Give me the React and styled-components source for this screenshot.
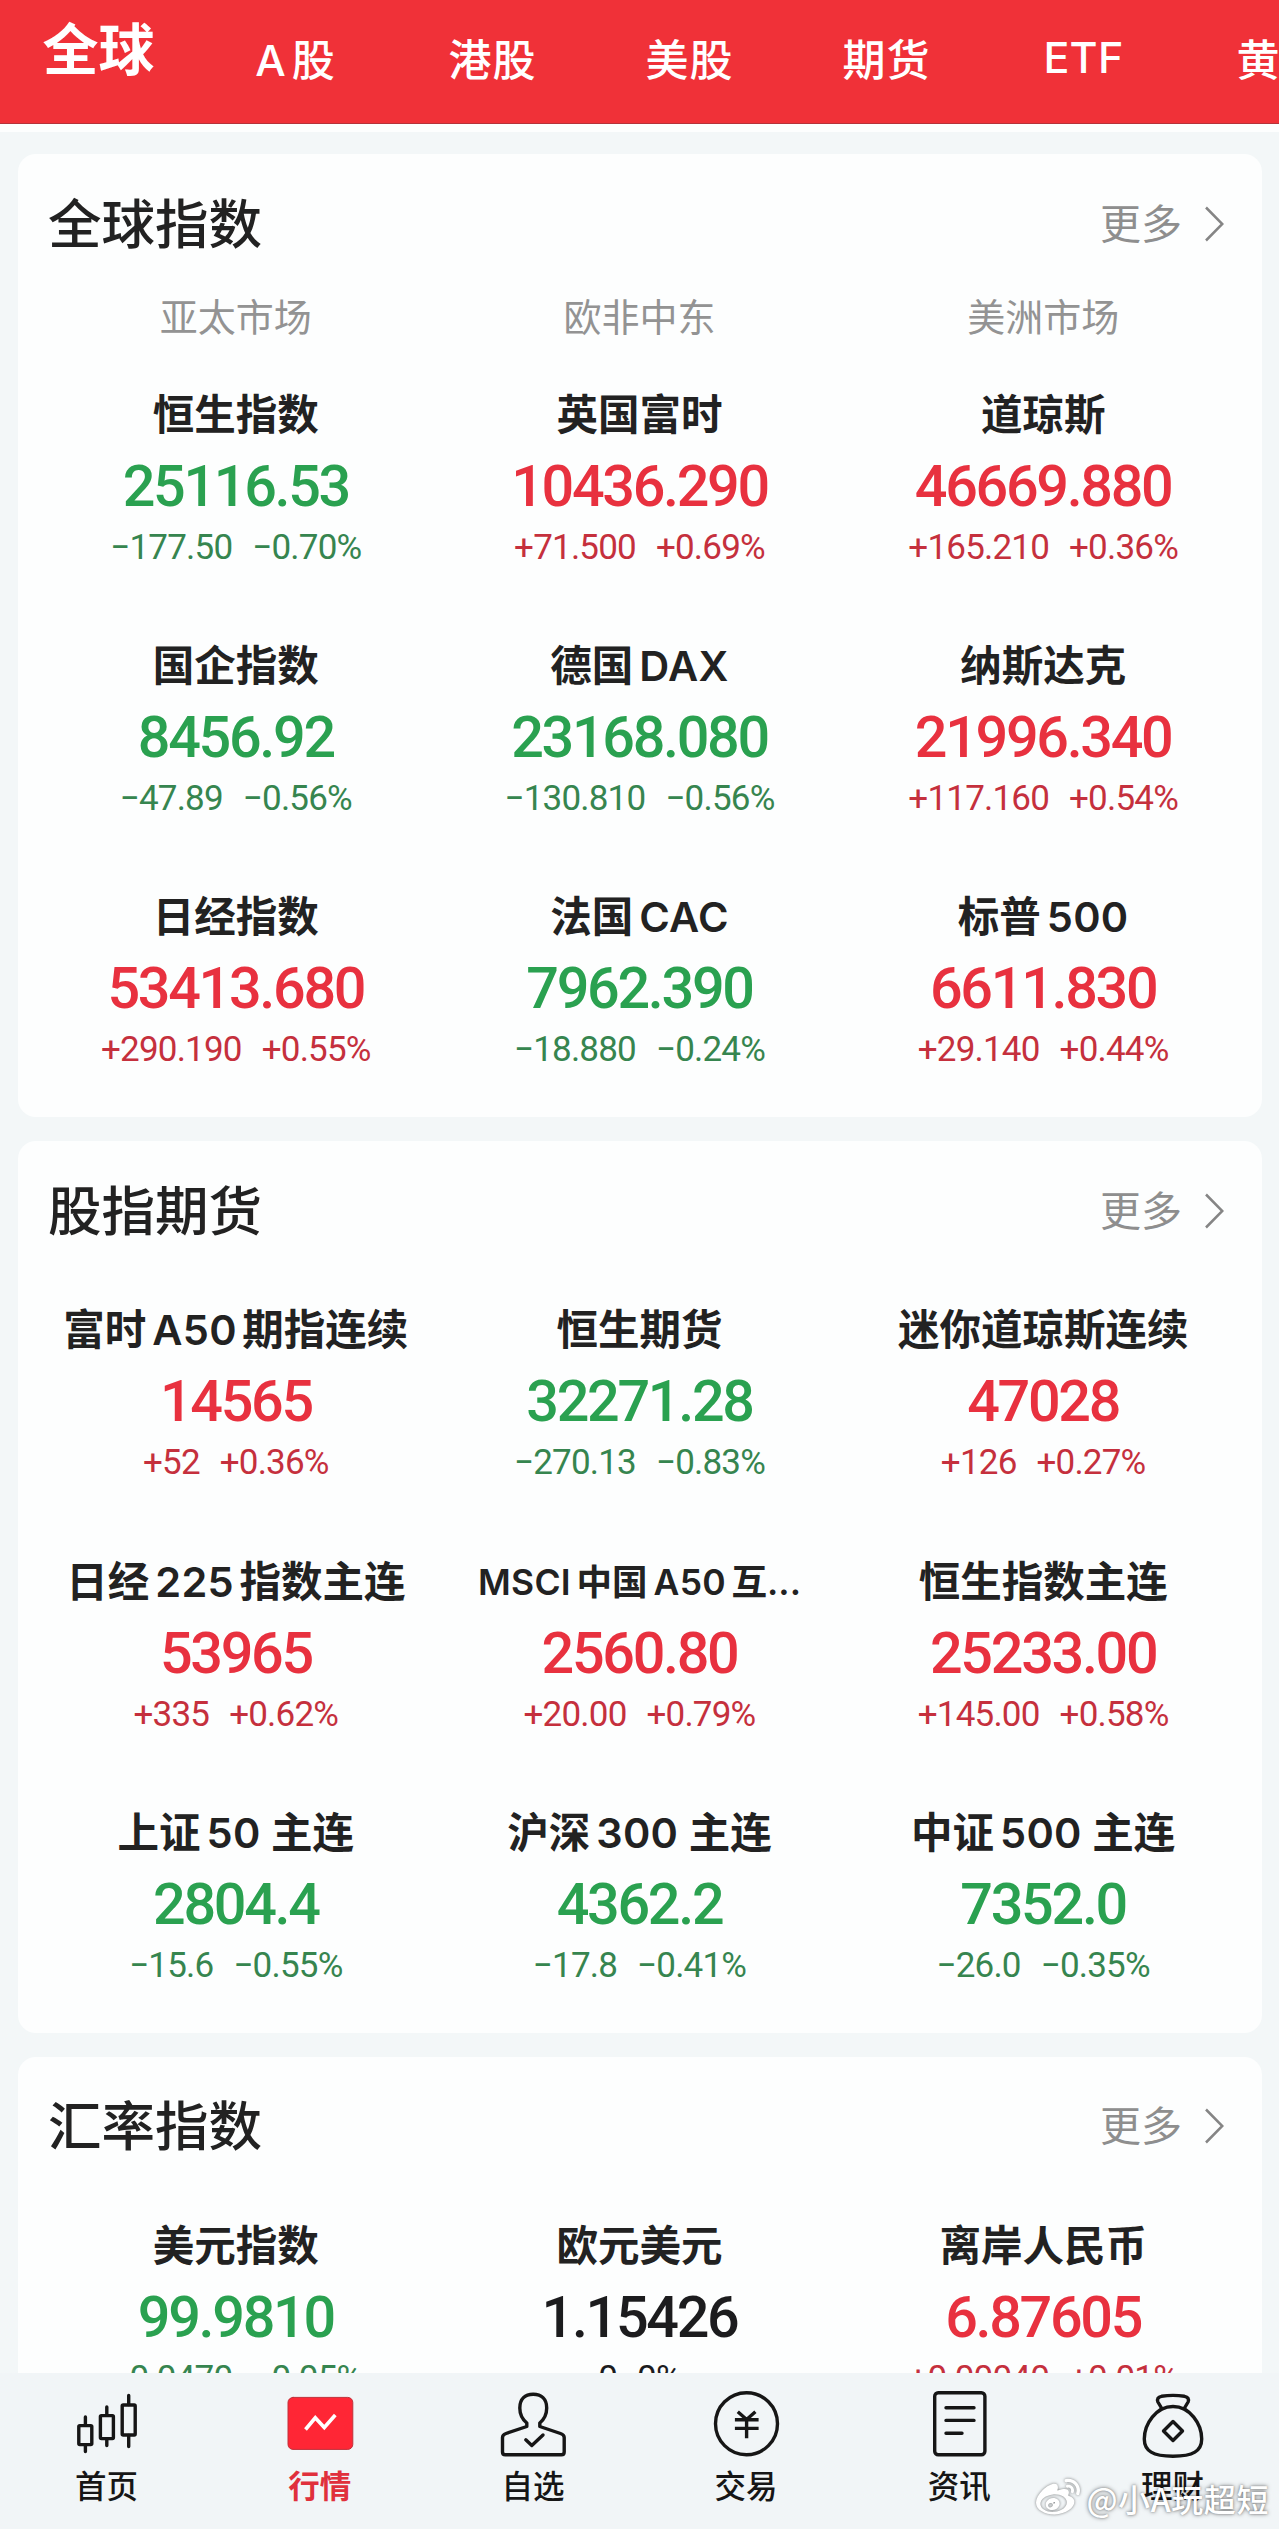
import { useState } from "react";
import styled, { createGlobalStyle } from "styled-components";
import { FaWeibo } from "react-icons/fa";

const GlobalStyle = createGlobalStyle`
  * {
    box-sizing: border-box;
  }
  body {
    margin: 0;
    background: #f3f7f8;
    font-family: Inter, "Noto Sans CJK SC", sans-serif;
    color: #222;
  }
`;

const colors = {
  up: "#e8313f",
  down: "#2aa150",
  flat: "#1c1c1e",
};

const subColors = {
  up: "#c5303d",
  down: "#36854f",
  flat: "#1c1c1e",
};

const Screen = styled.div`
  position: relative;
  display: flex;
  flex-direction: column;
  width: 1279px;
  height: 2529px;
  overflow: hidden;
`;

const TopTabs = styled.header`
  display: grid;
  grid-template-columns: repeat(7, 197px);
  flex: none;
  height: 124px;
  overflow: hidden;
  background: #f03138;
  border-bottom: 1px solid #b5333a;
`;

const TopTab = styled.button`
  height: ${(props) => (props.$active ? 91 : 113)}px;
  padding: 0;
  border: none;
  background: none;
  color: #fff;
  font-family: inherit;
  font-size: ${(props) => (props.$active ? 56 : 43)}px;
  font-weight: ${(props) => (props.$active ? 700 : 500)};
  letter-spacing: ${(props) => (props.$active ? 0 : 1)}px;
  white-space: nowrap;
`;

const Content = styled.main`
  display: flex;
  flex: 1;
  flex-direction: column;
  gap: 24px;
  min-height: 0;
  padding: 22px 17px 0 18px;
  overflow: hidden;
  border-top: 8px solid #fdfefe;
`;

const Card = styled.section`
  flex: none;
  padding: 0 17px 48px 16px;
  border-radius: 18px;
  background: #fdfefe;
`;

const CardHeader = styled.div`
  display: flex;
  align-items: center;
  justify-content: space-between;
  height: 141px;
  padding: 0 21px 0 14px;
`;

const CardTitle = styled.h2`
  margin: 0;
  font-size: 53.5px;
  font-weight: 500;
  line-height: 60px;
`;

const More = styled.button`
  display: flex;
  align-items: center;
  gap: 23px;
  padding: 0 0 2px;
  border: none;
  background: none;
  color: #8e8e8e;
  font-family: inherit;
  font-size: 41px;
  line-height: 50px;
`;

const Regions = styled.div`
  display: grid;
  grid-template-columns: repeat(3, 1fr);
  height: 72px;
  color: #939393;
  font-size: 38px;
  line-height: 45px;
  text-align: center;
`;

const Quotes = styled.div`
  display: grid;
  grid-template-columns: repeat(3, 1fr);
  row-gap: 51.2px;
`;

const Quote = styled.div`
  display: flex;
  flex-direction: column;
  align-items: center;
  height: 200px;
  padding-top: 20px;
  white-space: nowrap;
`;

const Name = styled.div`
  font-size: ${(props) => (props.$small ? 35.5 : 41.5)}px;
  font-weight: 600;
  line-height: 57px;
`;

const Latin = styled.span`
  margin-left: ${(props) => (props.$before ? 6 : 0)}px;
  margin-right: ${(props) => (props.$after ? 5.5 : 0)}px;
  letter-spacing: 0.3px;
`;

const Price = styled.div`
  color: ${(props) => colors[props.$trend]};
  font-family: Roboto, sans-serif;
  font-size: 57.5px;
  font-weight: 500;
  letter-spacing: -2.3px;
  line-height: 86px;
`;

const Change = styled.div`
  display: flex;
  gap: 20px;
  color: ${(props) => subColors[props.$trend]};
  font-family: Roboto, sans-serif;
  font-size: 35px;
  letter-spacing: -0.8px;
  line-height: 35px;
`;

const TabBar = styled.nav`
  display: grid;
  grid-template-columns: repeat(6, 1fr);
  flex: none;
  height: 156px;
  background: #f1f5f7;
`;

const TabItem = styled.button`
  display: flex;
  flex-direction: column;
  align-items: center;
  padding: 15px 0 0;
  border: none;
  background: none;
  color: ${(props) => (props.$active ? "#e0303c" : "#161616")};
  font-family: inherit;
  font-size: 31.5px;
  font-weight: ${(props) => (props.$active ? 700 : 500)};
  line-height: 53px;
`;

const Icon = styled.svg`
  display: block;
  fill: none;
  stroke: #161616;
  stroke-width: 3.4;
  stroke-linecap: round;
  stroke-linejoin: round;
`;

const Zigzag = styled.path`
  stroke: #fff;
  stroke-width: 3.6;
  stroke-linecap: butt;
  stroke-linejoin: miter;
`;

const Watermark = styled.div`
  position: absolute;
  right: 10px;
  bottom: 8px;
  display: flex;
  align-items: center;
  gap: 6px;
  color: #fff;
  font-family: "Noto Sans CJK SC", sans-serif;
  font-size: 32px;
  font-weight: 500;
  letter-spacing: 0.6px;
  line-height: 46px;
  text-shadow: 0 0 4px rgba(0, 0, 0, 0.5), 0 0 2px rgba(0, 0, 0, 0.3);

  svg {
    filter: drop-shadow(0 0 1.5px rgba(0, 0, 0, 0.5));
  }
`;

const topTabs = ["全球", "A股", "港股", "美股", "期货", "ETF", "黄金"];

const sections = [
  {
    title: "全球指数",
    regions: ["亚太市场", "欧非中东", "美洲市场"],
    quotes: [
      ["恒生指数", "25116.53", "−177.50", "−0.70%", "down"],
      ["英国富时", "10436.290", "+71.500", "+0.69%", "up"],
      ["道琼斯", "46669.880", "+165.210", "+0.36%", "up"],
      ["国企指数", "8456.92", "−47.89", "−0.56%", "down"],
      ["德国DAX", "23168.080", "−130.810", "−0.56%", "down"],
      ["纳斯达克", "21996.340", "+117.160", "+0.54%", "up"],
      ["日经指数", "53413.680", "+290.190", "+0.55%", "up"],
      ["法国CAC", "7962.390", "−18.880", "−0.24%", "down"],
      ["标普500", "6611.830", "+29.140", "+0.44%", "up"],
    ],
  },
  {
    title: "股指期货",
    quotes: [
      ["富时A50期指连续", "14565", "+52", "+0.36%", "up"],
      ["恒生期货", "32271.28", "−270.13", "−0.83%", "down"],
      ["迷你道琼斯连续", "47028", "+126", "+0.27%", "up"],
      ["日经225指数主连", "53965", "+335", "+0.62%", "up"],
      ["MSCI中国A50互...", "2560.80", "+20.00", "+0.79%", "up"],
      ["恒生指数主连", "25233.00", "+145.00", "+0.58%", "up"],
      ["上证50 主连", "2804.4", "−15.6", "−0.55%", "down"],
      ["沪深300 主连", "4362.2", "−17.8", "−0.41%", "down"],
      ["中证500 主连", "7352.0", "−26.0", "−0.35%", "down"],
    ],
  },
  {
    title: "汇率指数",
    quotes: [
      ["美元指数", "99.9810", "−0.0470", "−0.05%", "down"],
      ["欧元美元", "1.15426", "0", "0%", "flat"],
      ["离岸人民币", "6.87605", "+0.00040", "+0.01%", "up"],
    ],
  },
];

// adds a thin gap where latin letters or digits touch chinese characters
function SpacedText({ text }) {
  const parts = text.split(/([A-Za-z0-9]+)/).filter(Boolean);

  return parts.map((part, i) => {
    if (!/^[A-Za-z0-9]/.test(part)) return part;
    const next = parts[i + 1];
    return (
      <Latin key={i} $before={i > 0} $after={next && !next.startsWith(" ")}>
        {part}
      </Latin>
    );
  });
}

function HomeIcon() {
  return (
    <Icon width="72" height="72" viewBox="0 0 72 72">
      <rect x="7.8" y="37.6" width="13" height="19" rx="1" />
      <path d="M14.4 29v8M14.4 57v6.5" />
      <rect x="29.4" y="27.6" width="13" height="23" rx="1" />
      <path d="M35.8 19v8M35.8 51v6.5" />
      <rect x="51.2" y="17" width="13" height="30" rx="1" />
      <path d="M57.7 7.5v9M57.7 47.5v11" />
    </Icon>
  );
}

function MarketIcon() {
  return (
    <Icon width="72" height="72" viewBox="0 0 72 72">
      <rect x="4" y="9.4" width="64.8" height="52" rx="5" fill="#ff2635" stroke="#c0303a" strokeWidth="1" />
      <Zigzag d="M21.5 41.5L31.3 29.8L40.3 39.5L51.3 27" />
    </Icon>
  );
}

function WatchIcon() {
  return (
    <Icon width="72" height="72" viewBox="0 0 72 72">
      <path d="M29.8 38.5V35C25 31 22.8 26 22.8 20C22.8 11 28 6.3 36.2 6.3S49.7 11 49.7 20C49.7 26 47.5 31 42.8 35V38.5L63.5 45.5Q67.2 46.8 67.2 49.5V64Q67.2 66.8 64.4 66.8H8.3Q5.5 66.8 5.5 64V49.5Q5.5 46.8 9 45.5Z" />
      <path d="M28.8 51.8L34.8 57.5L46 47" />
    </Icon>
  );
}

function TradeIcon() {
  return (
    <Icon width="72" height="72" viewBox="0 0 72 72">
      <circle cx="36.5" cy="35.7" r="31" />
      <path
        d="M27.8 23.8L36.6 31.5L45.4 23.8M36.6 31.5V50.3M24.9 31.7H48.6M24.9 40.4H48.6"
        strokeLinecap="butt"
      />
    </Icon>
  );
}

function NewsIcon() {
  return (
    <Icon width="72" height="72" viewBox="0 0 72 72">
      <rect x="11.7" y="4.7" width="50.2" height="62" rx="3.5" />
      <path d="M23 19.7H51M23 32.4H51M23 45.3H39" />
    </Icon>
  );
}

function WealthIcon() {
  return (
    <Icon width="72" height="72" viewBox="0 0 72 72">
      <path d="M25.8 20.5L21.9 14Q20.3 9.3 25.5 8.3Q37 6.5 48.5 8.3Q53.7 9.3 52.1 14L48.2 20.5" />
      <path d="M37 18.5C20 18.5 8.3 36 8.3 51C8.3 63 17 68.2 37 68.2S65.7 63 65.7 51C65.7 36 54 18.5 37 18.5Z" />
      <path d="M37 33.5L46.5 43L37 52.5L27.5 43Z" />
    </Icon>
  );
}

const tabs = [
  { label: "首页", icon: HomeIcon },
  { label: "行情", icon: MarketIcon },
  { label: "自选", icon: WatchIcon },
  { label: "交易", icon: TradeIcon },
  { label: "资讯", icon: NewsIcon },
  { label: "理财", icon: WealthIcon },
];

function Section({ title, regions, quotes }) {
  return (
    <Card>
      <CardHeader>
        <CardTitle>{title}</CardTitle>
        <More>
          更多
          <svg width="19" height="36" viewBox="0 0 19 36" fill="none" stroke="#858585" strokeWidth="2.5">
            <path d="M1 1.5L17.3 18L1 34.5" />
          </svg>
        </More>
      </CardHeader>
      {regions && (
        <Regions>
          {regions.map((region) => (
            <div key={region}>{region}</div>
          ))}
        </Regions>
      )}
      <Quotes>
        {quotes.map(([name, price, change, percent, trend]) => (
          <Quote key={name}>
            <Name $small={name.length > 11}>
              <SpacedText text={name} />
            </Name>
            <Price $trend={trend}>{price}</Price>
            <Change $trend={trend}>
              <span>{change}</span>
              <span>{percent}</span>
            </Change>
          </Quote>
        ))}
      </Quotes>
    </Card>
  );
}

export default function App() {
  const [topTab, setTopTab] = useState("全球");
  const [tab, setTab] = useState("行情");

  return (
    <Screen>
      <GlobalStyle />
      <TopTabs>
        {topTabs.map((label) => (
          <TopTab key={label} $active={label === topTab} onClick={() => setTopTab(label)}>
            <SpacedText text={label} />
          </TopTab>
        ))}
      </TopTabs>
      <Content>
        {sections.map((section) => (
          <Section key={section.title} {...section} />
        ))}
      </Content>
      <TabBar>
        {tabs.map(({ label, icon: TabIcon }) => (
          <TabItem key={label} $active={label === tab} onClick={() => setTab(label)}>
            <TabIcon />
            {label}
          </TabItem>
        ))}
      </TabBar>
      <Watermark>
        <FaWeibo size={44} />
        @小A玩超短
      </Watermark>
    </Screen>
  );
}
